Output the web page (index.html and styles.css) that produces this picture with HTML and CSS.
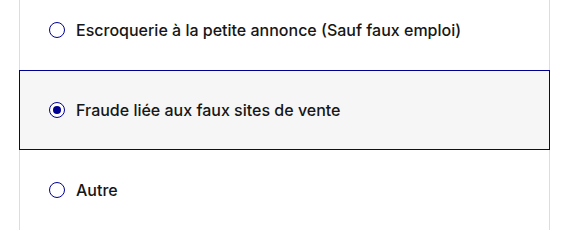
FILE: index.html
```html
<!DOCTYPE html>
<html lang="fr">
<head>
<meta charset="utf-8">
<link rel="stylesheet" href="styles.css">
</head>
<body>
<div class="choices">
  <label class="choice first">
    <span class="radio"></span>
    <span class="label">Escroquerie à la petite annonce (Sauf faux emploi)</span>
  </label>
  <label class="choice selected">
    <span class="radio checked"></span>
    <span class="label">Fraude liée aux faux sites de vente</span>
  </label>
  <label class="choice">
    <span class="radio"></span>
    <span class="label">Autre</span>
  </label>
</div>
</body>
</html>
```
FILE: styles.css
```css
html, body {
  margin: 0;
  padding: 0;
  background: #ffffff;
}
body {
  font-family: "Inter", "Noto Sans", sans-serif;
  color: #161616;
  overflow: hidden;
}
.choices {
  margin: -10px 0 0 19px;
  width: 531px;
  display: flex;
  flex-direction: column;
}
.choice {
  box-sizing: border-box;
  height: 80px;
  display: flex;
  align-items: center;
  gap: 11px;
  padding-left: 29px;
  border-left: 1px solid #dddddd;
  border-right: 1px solid #dddddd;
  background: #ffffff;
}
.choice.selected {
  border: 1px solid #000091;
  background: #f6f6f6;
  padding-left: 28px;
}
.choice.selected .radio { margin-left: 1px; }
.radio {
  box-sizing: border-box;
  width: 16px;
  height: 16px;
  border-radius: 50%;
  border: 1.5px solid #000091;
  background: #ffffff;
  flex: none;
  display: flex;
  align-items: center;
  justify-content: center;
}
.radio.checked::after {
  content: "";
  width: 8px;
  height: 8px;
  border-radius: 50%;
  background: #000091;
}
.label {
  font-size: 16px;
  font-weight: 500;
  line-height: 24px;
}
```
